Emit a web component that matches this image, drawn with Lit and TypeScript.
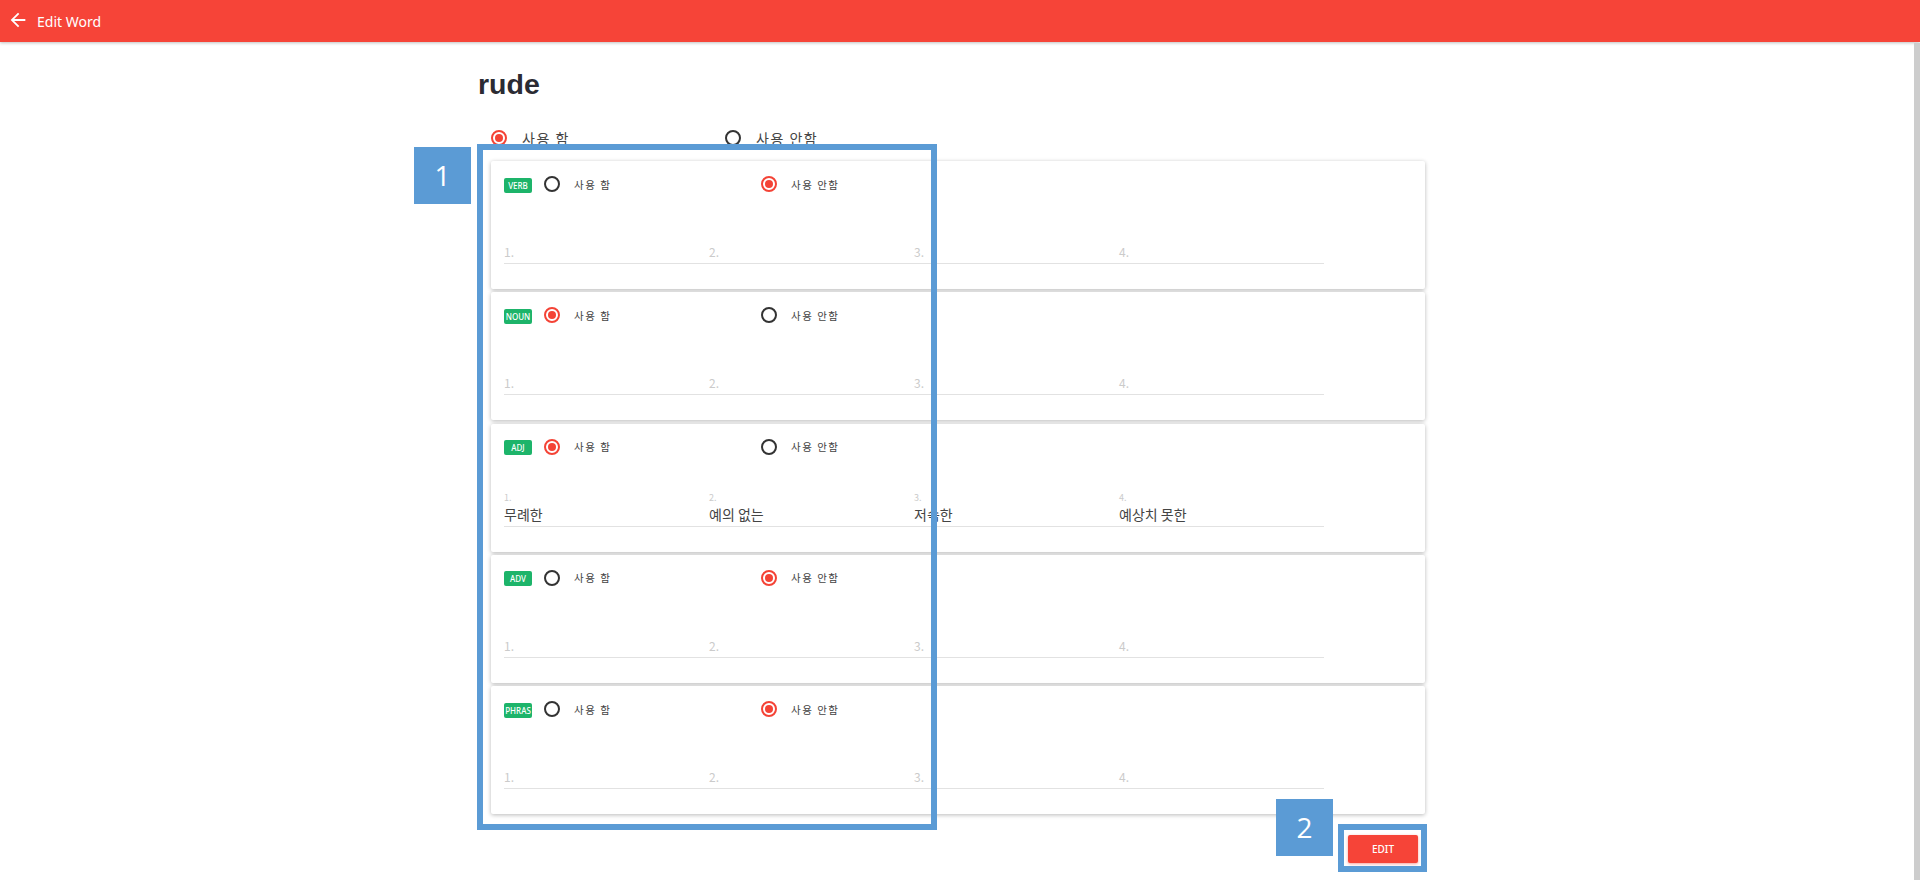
import { LitElement, html, css } from "lit";
import { customElement } from "lit/decorators.js";

interface Sense {
  tag: string;
  on: boolean;
  values: string[];
}

const SENSES: Sense[] = [
  { tag: "VERB", on: false, values: [] },
  { tag: "NOUN", on: true, values: [] },
  { tag: "ADJ", on: true, values: ["무례한", "예의 없는", "저속한", "예상치 못한"] },
  { tag: "ADV", on: false, values: [] },
  { tag: "PHRAS", on: false, values: [] },
];

@customElement("app-root")
export class AppRoot extends LitElement {
  static styles = css`
    :host {
      display: block;
      position: relative;
      width: 1920px;
      height: 880px;
      overflow: hidden;
      background: #fff;
      font-family: "Noto Sans CJK KR", "Noto Sans", sans-serif;
      color: #444;
    }
    .bar {
      height: 42px;
      background: #f64438;
      box-shadow: 0 1px 3px rgba(0, 0, 0, 0.25);
      display: flex;
      align-items: center;
      padding-left: 7px;
      gap: 8px;
      color: #fff;
      font-family: "Noto Sans", sans-serif;
      font-size: 14px;
      font-weight: 400;
    }
    .bar svg {
      width: 22px;
      height: 22px;
      display: block;
      margin-top: -3px;
    }
    main {
      width: 948px;
      margin-left: 478px;
      display: flex;
      flex-direction: column;
    }
    h1 {
      margin: 24px 0 0;
      height: 36px;
      font: bold 28.5px/36px "Liberation Sans", sans-serif;
      color: #2b2b33;
    }
    .top {
      margin: 23px 0 11px 13px;
      height: 25px;
      display: flex;
      align-items: center;
    }
    .opt {
      display: flex;
      align-items: center;
      width: 234px;
      letter-spacing: 1.5px;
    }
    .top .opt {
      font-size: 14px;
      gap: 15px;
    }
    .radio {
      width: 16px;
      height: 16px;
      box-sizing: border-box;
      border: 2px solid #333;
      border-radius: 50%;
      flex: none;
      display: flex;
      align-items: center;
      justify-content: center;
    }
    .radio.on {
      border-color: #f44336;
    }
    .radio.on::after {
      content: "";
      width: 8px;
      height: 8px;
      border-radius: 50%;
      background: #f44336;
    }
    .cards {
      margin: 0 0 0 13px;
      width: 934px;
      display: flex;
      flex-direction: column;
      gap: 3.3px;
    }
    .card {
      height: 128px;
      box-sizing: border-box;
      background: #fff;
      border-radius: 2px;
      box-shadow: 0 1px 4px rgba(0, 0, 0, 0.28);
      padding: 15px 0 0 13px;
      display: flex;
      flex-direction: column;
    }
    .row {
      display: flex;
      align-items: center;
      height: 16px;
    }
    .badge {
      width: 28px;
      height: 15px;
      border-radius: 2px;
      background: #1db46a;
      color: #fff;
      font-family: "Noto Sans", sans-serif;
      font-size: 8px;
      font-weight: 500;
      line-height: 15px;
      text-align: center;
      overflow: hidden;
      white-space: nowrap;
      margin: 2px 12px 0 0;
      flex: none;
    }
    .row .opt {
      font-size: 10.5px;
      letter-spacing: 1.5px;
      gap: 14px;
      width: 217px;
    }
    .fields {
      margin-top: 38px;
      width: 820px;
      display: grid;
      grid-template-columns: repeat(4, 1fr);
      border-bottom: 1px solid #e2e2e2;
      height: 33px;
    }
    .field {
      position: relative;
      font-size: 12px;
      font-weight: 400;
      color: #cbcbcb;
      line-height: 20px;
      padding-top: 12px;
    }
    .field.filled {
      color: #444;
      font-size: 14px;
      line-height: 20px;
      padding-top: 11px;
    }
    .field.filled span {
      position: absolute;
      left: 0;
      top: -1px;
      font-size: 9px;
      line-height: 12px;
      color: #cbcbcb;
    }
    .footer {
      display: flex;
      justify-content: flex-end;
      padding: 20.8px 8px 0 0;
    }
    button {
      width: 70px;
      height: 28px;
      border: 0;
      border-radius: 2px;
      background: #f64438;
      color: #fff;
      font-family: "Noto Sans", sans-serif;
      font-size: 10px;
      font-weight: 500;
      box-shadow: 0 1px 3px rgba(248, 68, 56, 0.5);
      padding: 0;
    }
    .scroll {
      position: absolute;
      top: 43px;
      right: 0;
      width: 6px;
      bottom: 0;
      background: #cdcdcd;
    }
    .frame {
      position: absolute;
      box-sizing: border-box;
      border: 6px solid #5b9bd5;
    }
    .frame.a {
      left: 477px;
      top: 144px;
      width: 460px;
      height: 686px;
    }
    .frame.b {
      left: 1338px;
      top: 824px;
      width: 89px;
      height: 48px;
    }
    .tag {
      position: absolute;
      width: 57px;
      height: 57px;
      background: #5b9bd5;
      color: #fff;
      font: 28px/57px "Open Sans", sans-serif;
      text-align: center;
    }
    .tag.a {
      left: 414px;
      top: 147px;
    }
    .tag.b {
      left: 1276px;
      top: 799px;
    }
  `;

  private option(on: boolean, label: string) {
    return html`<label class="opt"><i class="radio ${on ? "on" : ""}"></i><span>${label}</span></label>`;
  }

  private card(s: Sense) {
    return html`<section class="card">
      <div class="row">
        <b class="badge">${s.tag}</b>
        ${this.option(s.on, "사용 함")}
        ${this.option(!s.on, "사용 안함")}
      </div>
      <div class="fields">
        ${[0, 1, 2, 3].map((i) =>
          s.values.length
            ? html`<div class="field filled"><span>${i + 1}.</span>${s.values[i]}</div>`
            : html`<div class="field">${i + 1}.</div>`,
        )}
      </div>
    </section>`;
  }

  render() {
    return html`
      <header class="bar">
        <svg viewBox="0 0 24 24" fill="#fff"><path d="M20 11H7.83l5.59-5.59L12 4l-8 8 8 8 1.41-1.41L7.83 13H20v-2z"/></svg>
        <span>Edit Word</span>
      </header>
      <main>
        <h1>rude</h1>
        <div class="top">
          ${this.option(true, "사용 함")}
          ${this.option(false, "사용 안함")}
        </div>
        <div class="cards">${SENSES.map((s) => this.card(s))}</div>
        <div class="footer"><button>EDIT</button></div>
      </main>
      <div class="scroll"></div>
      <div class="frame a"></div>
      <div class="frame b"></div>
      <div class="tag a">1</div>
      <div class="tag b">2</div>
    `;
  }
}
